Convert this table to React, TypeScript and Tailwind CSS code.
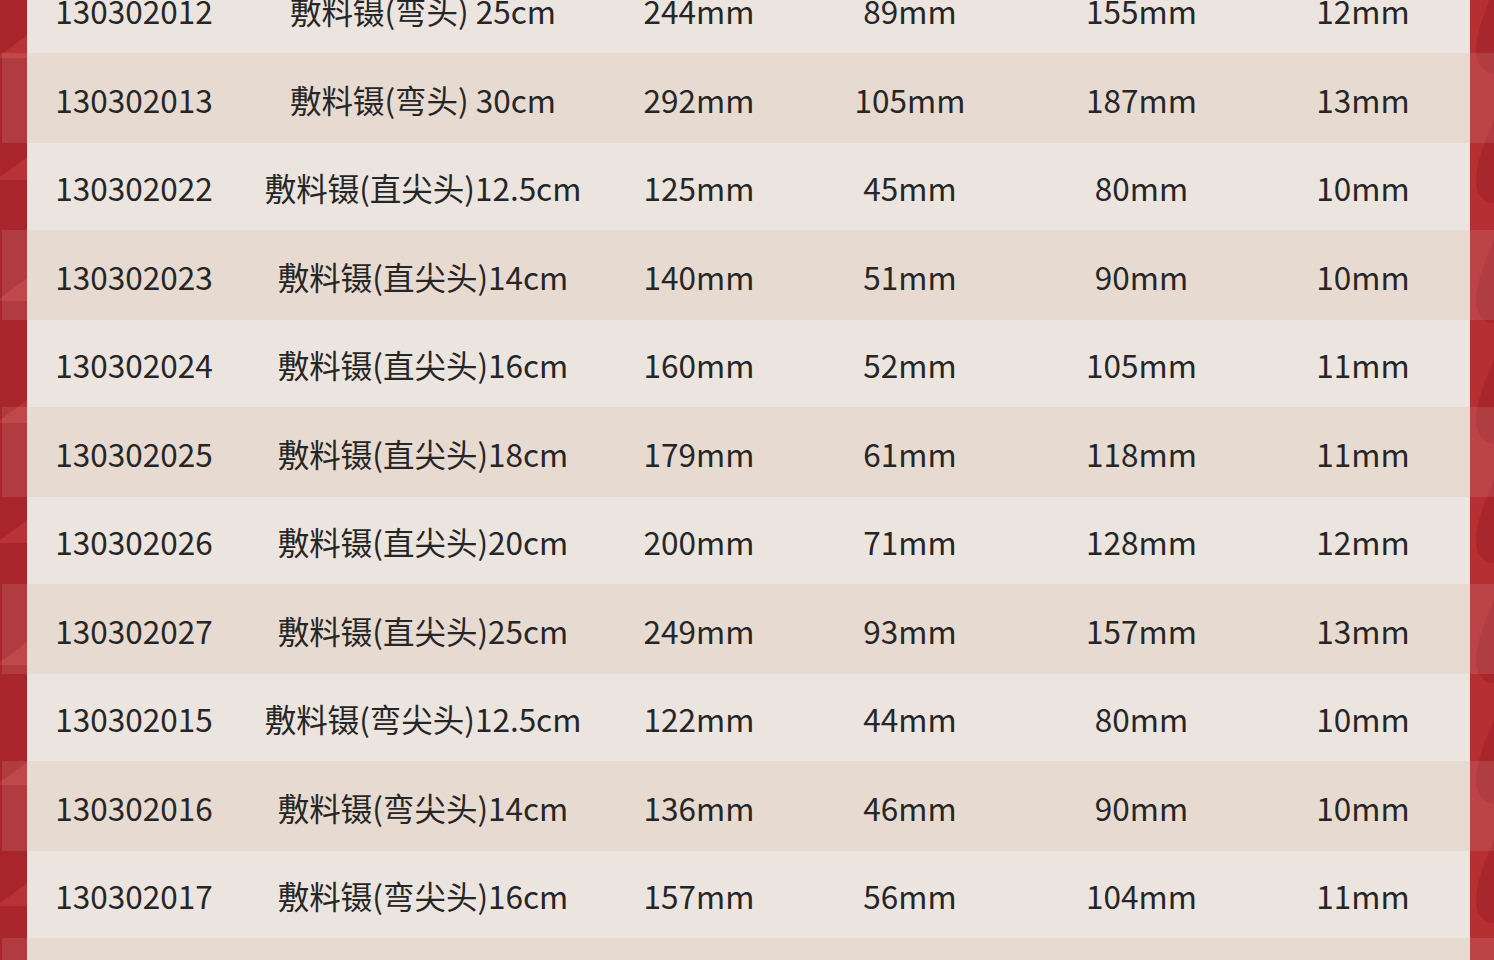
import React from "react";

type Row = {
  code: string;
  name: string;
  total: string;
  head: string;
  grip: string;
  width: string;
};

const rows: Row[] = [
  { code: "130302012", name: "敷料镊(弯头) 25cm", total: "244mm", head: "89mm", grip: "155mm", width: "12mm" },
  { code: "130302013", name: "敷料镊(弯头) 30cm", total: "292mm", head: "105mm", grip: "187mm", width: "13mm" },
  { code: "130302022", name: "敷料镊(直尖头)12.5cm", total: "125mm", head: "45mm", grip: "80mm", width: "10mm" },
  { code: "130302023", name: "敷料镊(直尖头)14cm", total: "140mm", head: "51mm", grip: "90mm", width: "10mm" },
  { code: "130302024", name: "敷料镊(直尖头)16cm", total: "160mm", head: "52mm", grip: "105mm", width: "11mm" },
  { code: "130302025", name: "敷料镊(直尖头)18cm", total: "179mm", head: "61mm", grip: "118mm", width: "11mm" },
  { code: "130302026", name: "敷料镊(直尖头)20cm", total: "200mm", head: "71mm", grip: "128mm", width: "12mm" },
  { code: "130302027", name: "敷料镊(直尖头)25cm", total: "249mm", head: "93mm", grip: "157mm", width: "13mm" },
  { code: "130302015", name: "敷料镊(弯尖头)12.5cm", total: "122mm", head: "44mm", grip: "80mm", width: "10mm" },
  { code: "130302016", name: "敷料镊(弯尖头)14cm", total: "136mm", head: "46mm", grip: "90mm", width: "10mm" },
  { code: "130302017", name: "敷料镊(弯尖头)16cm", total: "157mm", head: "56mm", grip: "104mm", width: "11mm" },
  { code: "130302018", name: "敷料镊(弯尖头)18cm", total: "178mm", head: "62mm", grip: "116mm", width: "11mm" },
];

// decorative curves in the red side strips
const leftWedges = [35, 157, 278, 400, 520, 642, 762, 883];
const rightDrops = [-10, 120, 240, 360, 480, 600, 720, 840];

const SideDecor = () => (
  <div className="absolute inset-0 pointer-events-none">
    <svg className="absolute left-0 top-0" width="27" height="960" viewBox="0 0 27 960">
      <rect width="27" height="960" fill="#a8262b" />
      {leftWedges.map((y) => (
        <path key={y} d={`M0 ${y + 20} Q14 ${y + 10} 27 ${y} L27 ${y + 23} L0 ${y + 23} Z`} fill="#b93236" />
      ))}
    </svg>
    <svg className="absolute right-0 top-0" width="24" height="960" viewBox="0 0 24 960">
      <rect width="24" height="960" fill="#b52f33" />
      {rightDrops.map((y) => (
        <path
          key={y}
          d={`M24 ${y} C13 ${y + 25} 6 ${y + 45} 6 ${y + 60} C6 ${y + 74} 13 ${y + 82} 24 ${y + 84} Z`}
          fill="#a9272c"
        />
      ))}
    </svg>
  </div>
);

const TableRow = ({ row, dark }: { row: Row; dark: boolean }) => (
  <div className={`flex ${dark ? "h-[90px]" : "h-[87px]"}`}>
    <div className="w-[27px] shrink-0 pl-[2px]">
      <div className={`h-full ${dark ? "bg-white/10" : ""}`} />
    </div>
    <div
      className={`grid flex-1 grid-cols-[214px_364px_188px_234px_229px_214px] items-center pt-[3px] text-[31.5px] leading-none text-[#262626] ${
        dark ? "bg-[#e6dad1]" : "bg-[#ebe4df]"
      }`}
    >
      <div className="text-center">{row.code}</div>
      <div className="text-center">{row.name}</div>
      <div className="text-center">{row.total}</div>
      <div className="text-center">{row.head}</div>
      <div className="text-center">{row.grip}</div>
      <div className="text-center">{row.width}</div>
    </div>
    <div className={`w-[24px] shrink-0 ${dark ? "bg-white/10" : ""}`} />
  </div>
);

const App = () => {
  return (
    <main
      className="relative h-[960px] w-[1494px] overflow-hidden bg-[#a8262b]"
      style={{ fontFamily: '"Noto Sans CJK SC", "Noto Sans", sans-serif' }}
    >
      <SideDecor />
      <div className="relative -mt-[34px] flex flex-col">
        {rows.map((row, i) => (
          <TableRow key={row.code} row={row} dark={i % 2 === 1} />
        ))}
      </div>
    </main>
  );
};

export default App;
